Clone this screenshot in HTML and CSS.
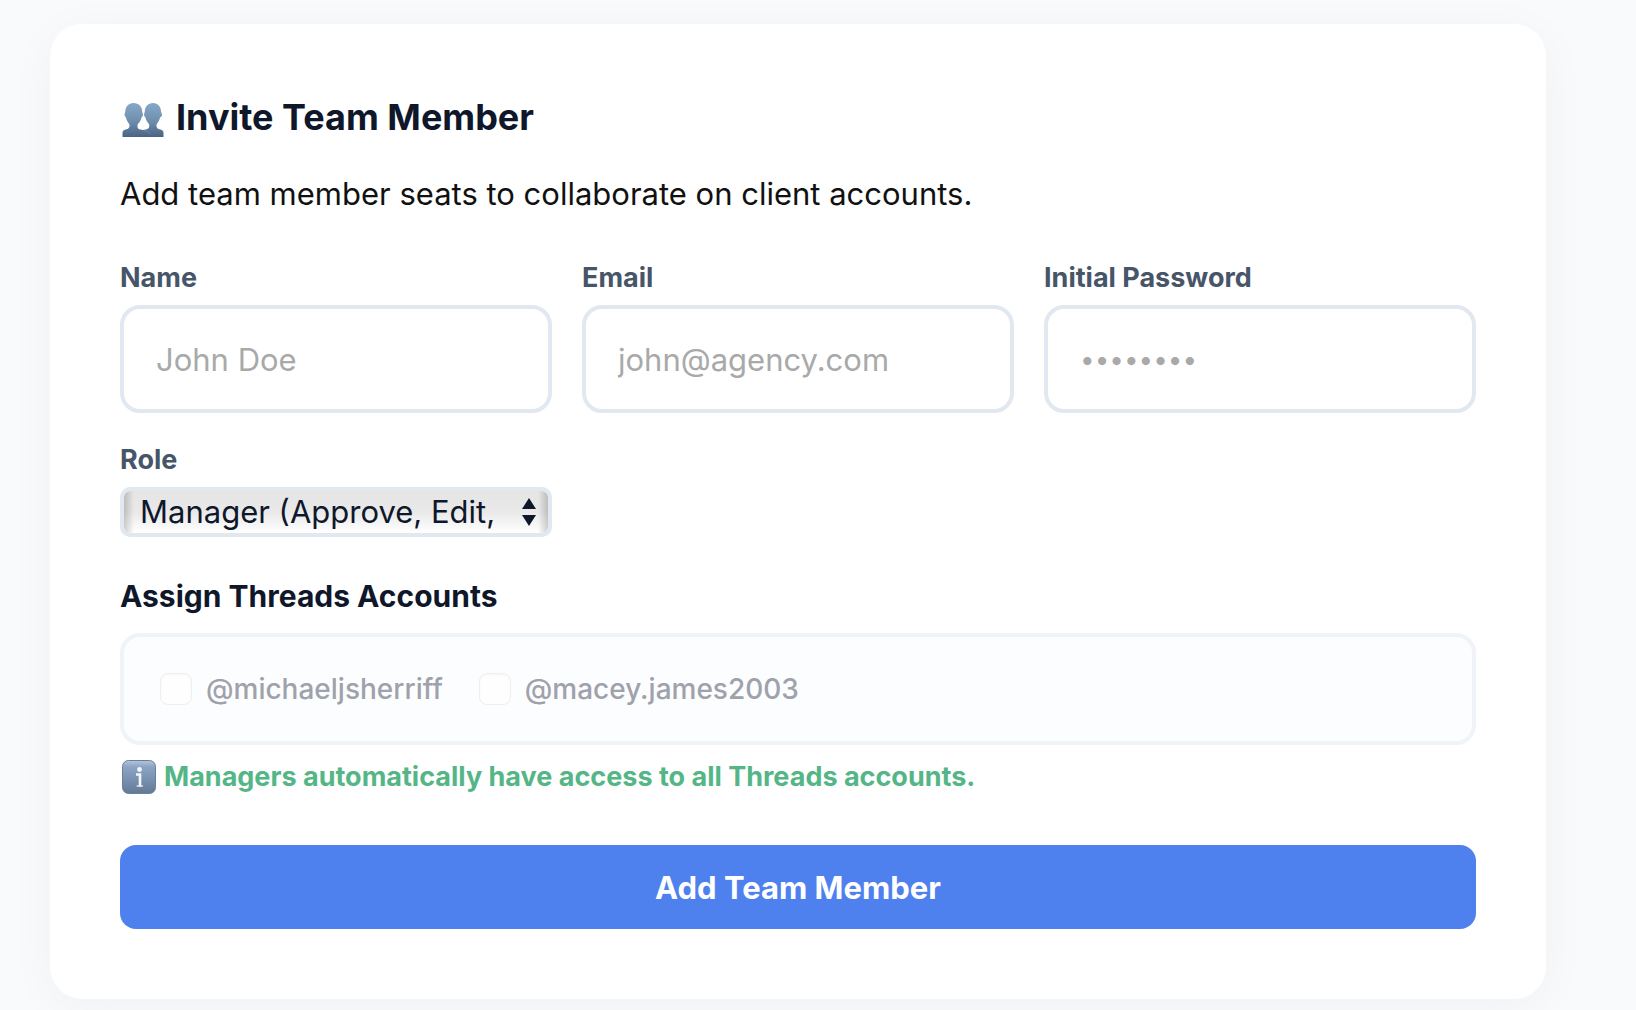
FILE: index.html
```html
<!DOCTYPE html>
<html lang="en">
<head>
    <meta charset="UTF-8">
    <meta name="viewport" content="width=device-width, initial-scale=1.0">
    <title>Invite Team Member</title>
    <link rel="stylesheet" href="styles.css">
</head>
<body>

<main class="card">
    <h2 class="card-title">
        <svg class="icon-people" viewBox="0 0 42 36" aria-hidden="true">
            <defs>
                <linearGradient id="people" x1="0" y1="0" x2="0" y2="1">
                    <stop offset="0" stop-color="#86a9c8"/>
                    <stop offset="0.5" stop-color="#7190b0"/>
                    <stop offset="1" stop-color="#4a6385"/>
                </linearGradient>
            </defs>
            <path fill="url(#people)" d="M11.500 1C6.500 1 3.300 4.800 3.300 9.500L2.500 12.500Q2.500 14.500 4 15.500C4.500 18.500 6 20.200 7.300 22C8.200 25.500 6.500 26.800 3.500 27.600Q.500 28.400 .500 31V35H41.500V31Q41.500 28.400 38.500 27.600C35.500 26.800 33.800 25.500 34.700 22C36 20.200 37.500 18.500 38 15.500Q40.500 14.500 40 12.500L39 9.500C39 4.800 36 1 31 1C26 1 22.800 4.800 22.800 9.500L22 12.500Q22 14.500 23.500 15.500C24 18.500 25.500 20.200 27 22C28 25.500 26.300 27 23.500 27.600Q21 28.400 18.500 27.600C15.700 27 15 25.500 15.800 22C17.500 20.200 19 18.500 19.500 15.500Q21 14.500 21 12.500L20.200 9.500C20.200 4.800 17 1 11.500 1Z"/>
            <path d="M22 28.500Q27 29 27.500 32.500" fill="none" stroke="#7d9ab8" stroke-width="0.8" opacity="0.6"/>
        </svg>
        Invite Team Member
    </h2>
    <p class="card-text">Add team member seats to collaborate on client accounts.</p>

    <form>
        <div class="form-grid">
            <div class="form-group">
                <label for="name">Name</label>
                <input class="field" type="text" id="name" placeholder="John Doe">
            </div>
            <div class="form-group">
                <label for="email">Email</label>
                <input class="field" type="email" id="email" placeholder="john@agency.com">
            </div>
            <div class="form-group">
                <label for="password">Initial Password</label>
                <input class="field" type="password" id="password" placeholder="••••••••">
            </div>
            <div class="form-group">
                <label for="role">Role</label>
                <div class="select-wrap">
                    <select id="role">
                        <option>Manager (Approve, Edit,</option>
                    </select>
                    <svg class="select-arrows" viewBox="0 0 14 28" aria-hidden="true">
                        <path d="M7 0L14 11H0ZM0 17H14L7 28Z"/>
                    </svg>
                </div>
            </div>
        </div>

        <h3 class="section-title">Assign Threads Accounts</h3>
        <div class="accounts">
            <label class="account"><input type="checkbox" disabled>@michaeljsherriff</label>
            <label class="account"><input type="checkbox" disabled>@macey.james2003</label>
        </div>
        <p class="hint">
            <svg class="icon-info" viewBox="0 0 34 34" aria-hidden="true">
                <defs>
                    <linearGradient id="info" x1="0" y1="0" x2="0" y2="1">
                        <stop offset="0" stop-color="#b4c5d9"/>
                        <stop offset="0.2" stop-color="#8ba4c4"/>
                        <stop offset="0.5" stop-color="#7d95b5"/>
                        <stop offset="1" stop-color="#647992"/>
                    </linearGradient>
                </defs>
                <rect x="0.5" y="0.5" width="33" height="33" rx="6" fill="url(#info)" stroke="#6880a0"/>
                <circle cx="17.500" cy="9.500" r="2.400" fill="#f3f6fa"/>
                <path d="M14 14.500H18V26.500" fill="none" stroke="#f3f6fa" stroke-width="2.600"/>
                <path d="M14.500 26H21" stroke="#f3f6fa" stroke-width="1.200"/>
            </svg>
            Managers automatically have access to all Threads accounts.
        </p>
        <button class="btn" type="submit">Add Team Member</button>
    </form>
</main>

</body>
</html>
```
FILE: styles.css
```css
* {
    box-sizing: border-box;
}
body {
    margin: 0;
    padding: 24px 90px 11px 50px;
    background-color: #f9fafc;
    color: #111111;
    font-family: Inter, "Liberation Sans", sans-serif;
    font-size: 31px;
}
.card {
    background-color: #ffffff;
    border-radius: 32px;
    padding: 70px;
    box-shadow: 0 8px 48px rgba(15, 23, 42, 0.04);
}
.card-title {
    display: flex;
    align-items: flex-end;
    gap: 12px;
    margin: 0 0 35px;
    color: #0f172a;
    font-size: 36px;
    line-height: 46px;
    font-weight: 700;
}
.icon-people {
    width: 42px;
    height: 36px;
    margin: 0 0 2px 2px;
}
.card-text {
    margin: 0 0 48px;
    line-height: 38px;
}
.form-grid {
    display: grid;
    grid-template-columns: repeat(3, minmax(0, 1fr));
    gap: 30px;
}
.form-group label {
    display: block;
    margin-bottom: 10px;
    color: #475569;
    font-size: 27px;
    line-height: 34px;
    font-weight: 700;
}
.field {
    display: block;
    width: 100%;
    height: 108px;
    padding: 0 32px;
    border: 4px solid #e2e8f0;
    border-radius: 20px;
    background-color: #ffffff;
    color: #0f172a;
    font: inherit;
}
.field::placeholder {
    color: #a9a9a9;
    opacity: 1;
}
.field[type="password"] {
    font-size: 26px;
}
.select-wrap {
    position: relative;
}
select {
    appearance: none;
    display: block;
    width: 100%;
    height: 50px;
    padding: 0 16px 2px;
    border: 4px solid #e2e8f0;
    border-radius: 10px;
    background: linear-gradient(to right, rgba(0, 0, 0, 0.18), transparent 10px),
        linear-gradient(to left, rgba(0, 0, 0, 0.18), transparent 10px),
        linear-gradient(#e5e5e5, #e9e9e9 50%, #ffffff);
    background-clip: padding-box;
    color: #0f172a;
    font: inherit;
}
.select-arrows {
    position: absolute;
    top: 11px;
    right: 16px;
    width: 14px;
    height: 28px;
    fill: #0f172a;
    pointer-events: none;
}
.section-title {
    margin: 41px 0 19px;
    color: #0f172a;
    font-size: 30px;
    line-height: 36px;
    font-weight: 700;
}
/* Greyed out while the role is Manager */
.accounts {
    display: flex;
    align-items: center;
    gap: 36px;
    height: 112px;
    padding: 0 36px;
    border: 4px solid #f0f3f7;
    border-radius: 20px;
    background-color: #fcfdff;
}
.account {
    display: flex;
    align-items: center;
    gap: 14px;
    color: #9fa2ab;
    font-size: 28px;
    line-height: 34px;
    font-weight: 500;
}
.account input {
    appearance: none;
    width: 32px;
    height: 32px;
    margin: 0;
    border: 1px solid #efefef;
    border-radius: 8px;
    background-color: #fefefe;
    box-shadow: inset 0 1px 2px rgba(0, 0, 0, 0.04);
}
.hint {
    display: flex;
    align-items: center;
    gap: 8px;
    margin: 15px 0 51px;
    color: #54b686;
    font-size: 27px;
    line-height: 34px;
    font-weight: 700;
}
.icon-info {
    width: 34px;
    height: 34px;
    margin-left: 2px;
}
.btn {
    display: block;
    width: 100%;
    height: 84px;
    border: none;
    border-radius: 16px;
    background-color: #4f81ee;
    color: #ffffff;
    font: inherit;
    font-weight: 700;
    cursor: pointer;
}
```
